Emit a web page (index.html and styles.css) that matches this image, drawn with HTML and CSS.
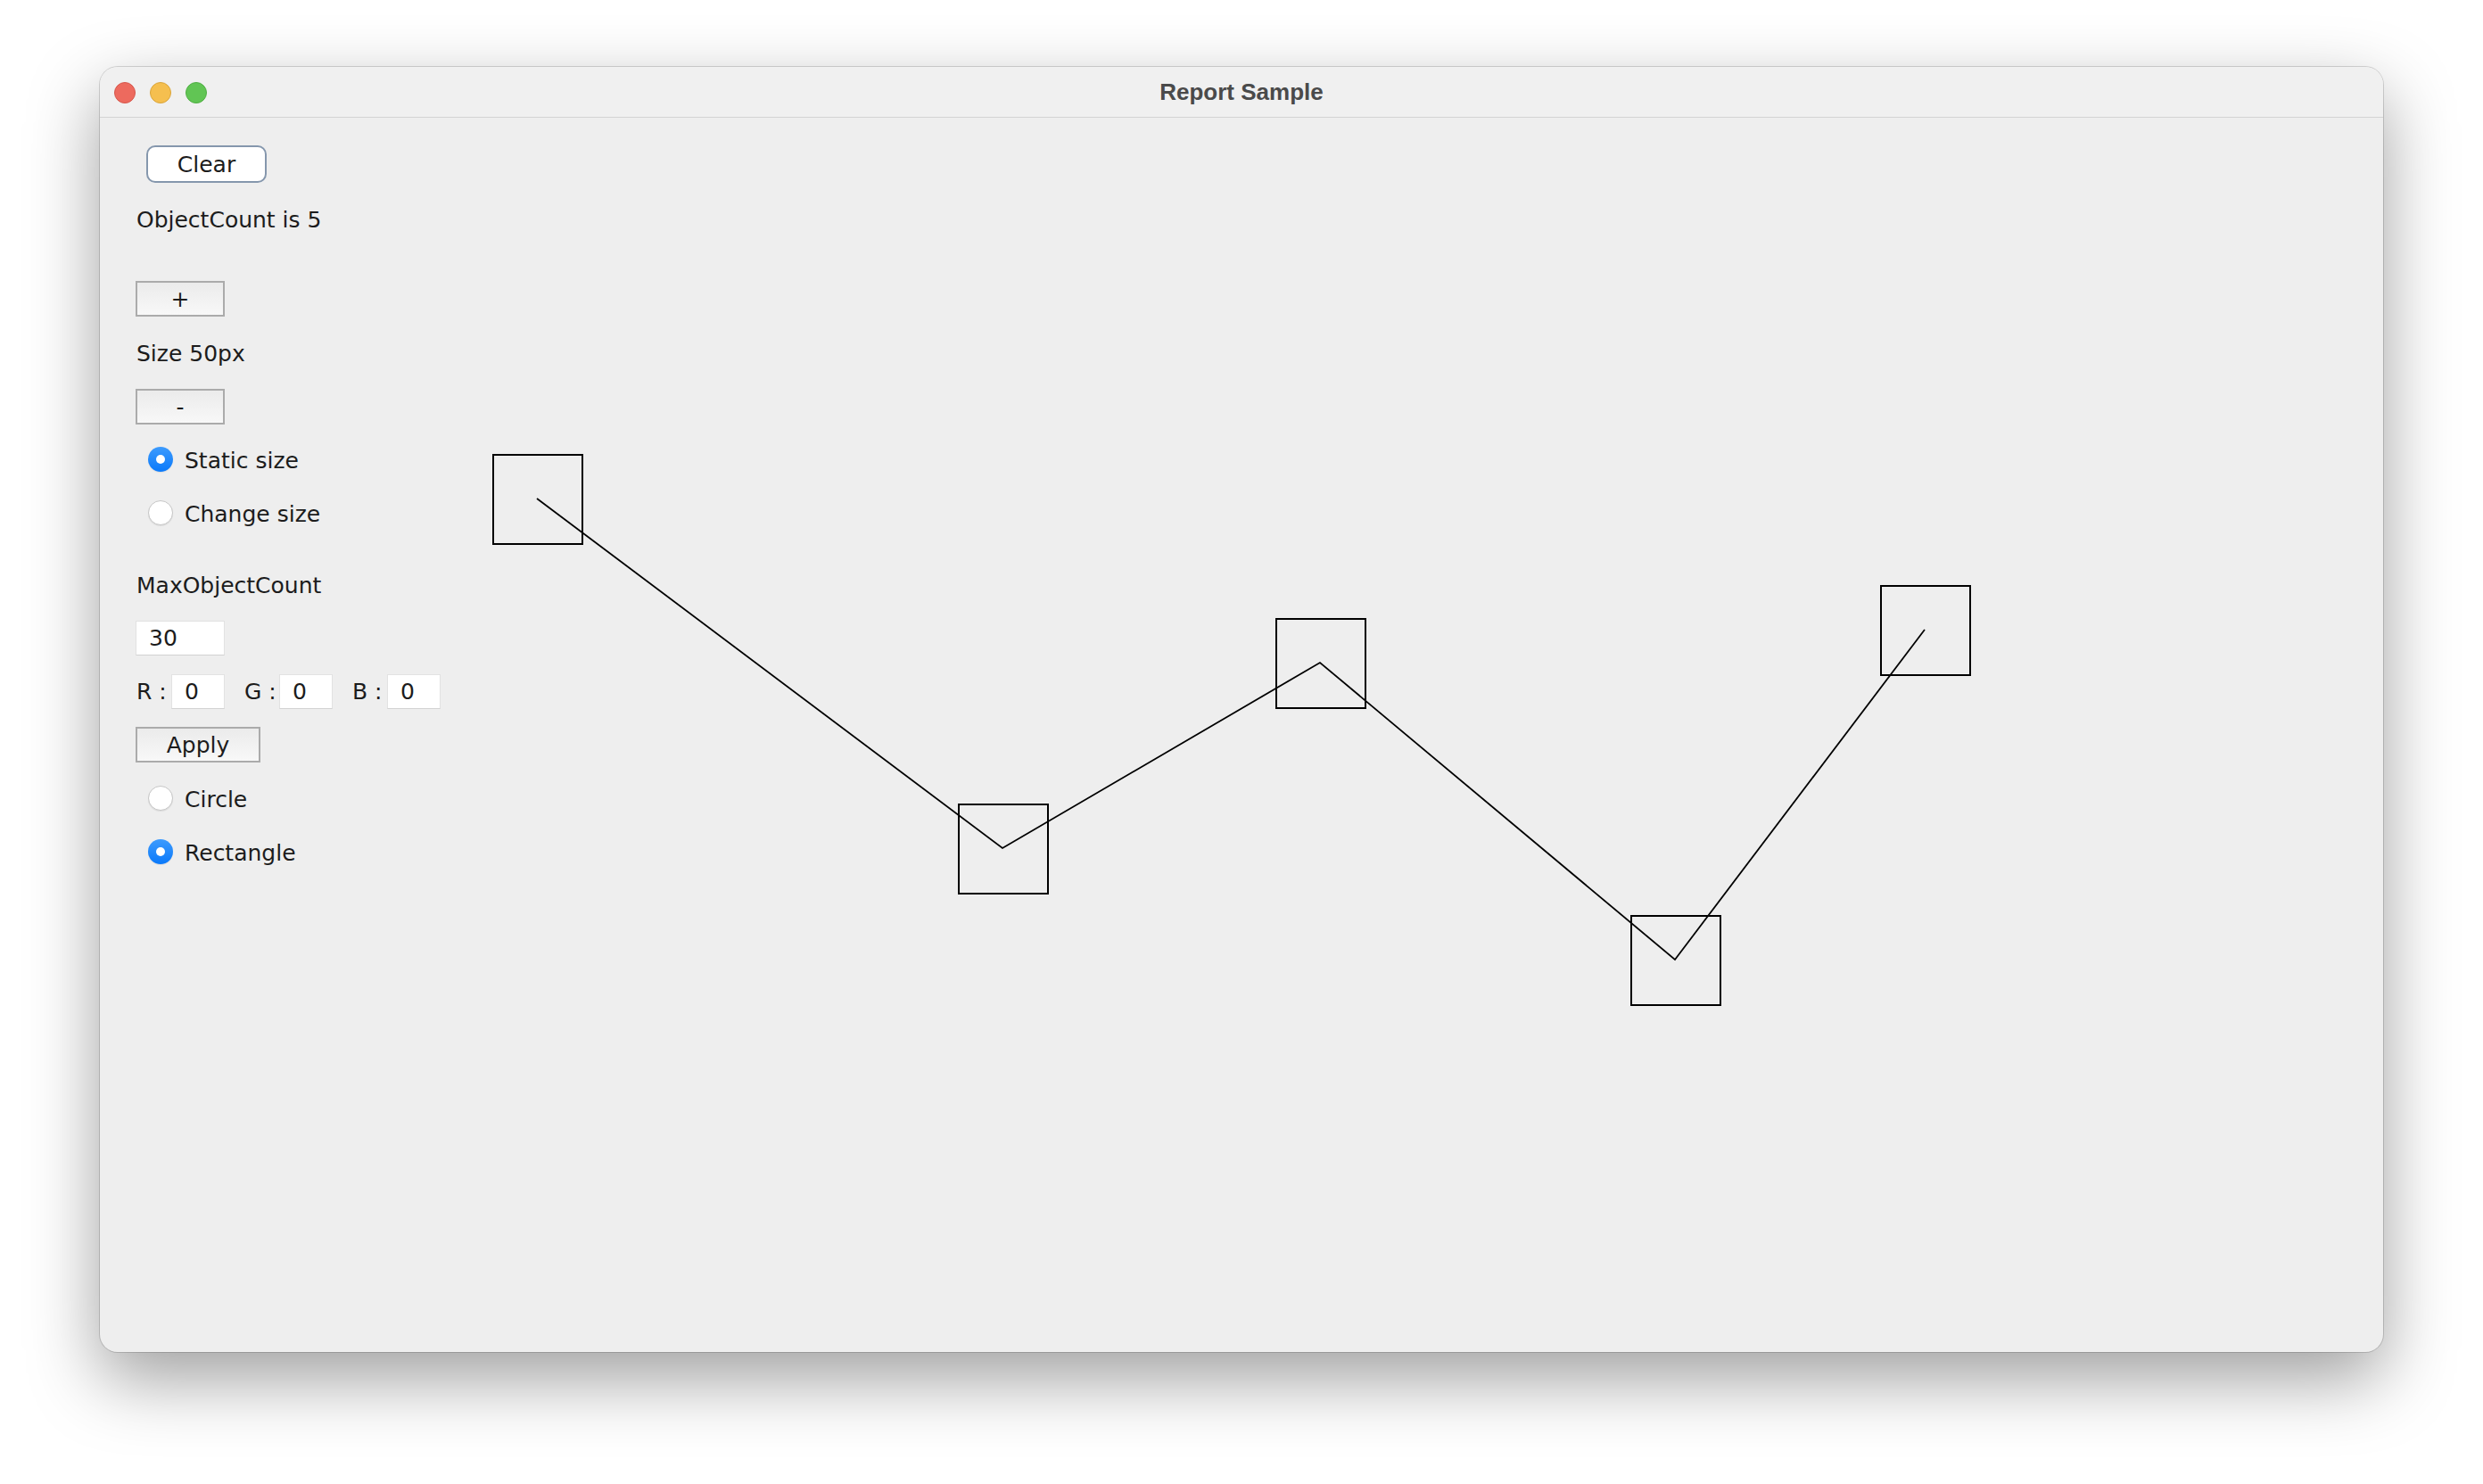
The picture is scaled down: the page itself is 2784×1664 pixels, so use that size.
FILE: index.html
```html
<!DOCTYPE html>
<html lang="en">
<head>
    <meta charset="UTF-8">
    <title>Report Sample</title>
    <link rel="stylesheet" href="styles.css">
</head>
<body>

    <div class="window">
        <div class="titlebar">
            <div class="lights">
                <span class="light red"></span>
                <span class="light yellow"></span>
                <span class="light green"></span>
            </div>
            <div class="title">Report Sample</div>
        </div>

        <div class="content">
            <svg class="canvas" width="2560" height="1383" viewBox="0 0 2560 1383">
                <g class="shapes">
                    <rect x="441" y="378" width="100" height="100"></rect>
                    <rect x="963" y="770" width="100" height="100"></rect>
                    <rect x="1319" y="562" width="100" height="100"></rect>
                    <rect x="1717" y="895" width="100" height="100"></rect>
                    <rect x="1997" y="525" width="100" height="100"></rect>
                </g>
                <polyline class="path" points="490,427 1012,819 1368,611 1766,944 2046,574"></polyline>
            </svg>

            <div class="panel">
                <button class="btn-default">Clear</button>
                <div class="label gap-a">ObjectCount is 5</div>
                <button class="btn btn-plus">+</button>
                <div class="label gap-a">Size 50px</div>
                <button class="btn btn-minus">-</button>

                <div class="radio gap-b"><span class="dot on"></span>Static size</div>
                <div class="radio gap-c"><span class="dot"></span>Change size</div>

                <div class="label gap-d">MaxObjectCount</div>
                <div class="field field-wide gap-b">30</div>

                <div class="rgb">
                    <div class="rgb-item"><span class="rgb-label">R :</span><div class="field">0</div></div>
                    <div class="rgb-item"><span class="rgb-label">G :</span><div class="field">0</div></div>
                    <div class="rgb-item"><span class="rgb-label">B :</span><div class="field">0</div></div>
                </div>

                <button class="btn btn-apply">Apply</button>

                <div class="radio gap-c"><span class="dot"></span>Circle</div>
                <div class="radio gap-c"><span class="dot on"></span>Rectangle</div>
            </div>
        </div>
    </div>

</body>
</html>
```

FILE: styles.css
```css
body {
    margin: 0;
    padding: 75px 0 0 112px;
    min-height: 1664px;
    box-sizing: border-box;
    background-color: #ffffff;
    font-family: 'DejaVu Sans', 'Noto Sans', sans-serif;
    font-size: 25px;
    color: #1c1c1c;
}

.window {
    width: 2560px;
    height: 1441px;
    border-radius: 20px;
    overflow: hidden;
    background-color: #eeeeee;
    box-shadow: 0 0 0 1px rgba(0, 0, 0, 0.15), 0 30px 80px rgba(0, 0, 0, 0.38);
    display: flex;
    flex-direction: column;
}

.titlebar {
    height: 56px;
    flex: none;
    background-color: #f0f0f0;
    border-bottom: 1px solid #d3d3d3;
    position: relative;
    display: flex;
    align-items: center;
    justify-content: center;
}

.lights {
    position: absolute;
    left: 16px;
    top: 17px;
    display: flex;
    gap: 16px;
}

.light {
    width: 22px;
    height: 22px;
    border-radius: 50%;
    border: 1px solid transparent;
}

.red {
    background-color: #ed6a5e;
    border-color: #d5574c;
}

.yellow {
    background-color: #f5bf4f;
    border-color: #d9a43a;
}

.green {
    background-color: #61c554;
    border-color: #4fae43;
}

.title {
    font-family: 'Liberation Sans', Arial, sans-serif;
    font-weight: bold;
    font-size: 26px;
    color: #4a4a4a;
}

.content {
    flex: 1;
    position: relative;
}

.canvas {
    position: absolute;
    left: 0;
    top: 0;
}

.shapes rect {
    fill: none;
    stroke: #000000;
    stroke-width: 2;
    shape-rendering: crispEdges;
}

.path {
    fill: none;
    stroke: #000000;
    stroke-width: 1.8;
}

.panel {
    position: relative;
    padding: 31px 0 0 40px;
    display: flex;
    flex-direction: column;
    align-items: flex-start;
}

.label {
    height: 40px;
    line-height: 40px;
    padding-left: 1px;
}

.gap-a {
    margin-top: 22px;
}

.gap-b {
    margin-top: 19px;
}

.gap-c {
    margin-top: 20px;
}

.gap-d {
    margin-top: 42px;
}

button {
    font-family: 'DejaVu Sans', 'Noto Sans', sans-serif;
    font-size: 25px;
    color: #1c1c1c;
    padding: 0;
    cursor: pointer;
}

.btn-default {
    margin-left: 12px;
    width: 135px;
    height: 42px;
    background-color: #ffffff;
    border: 2px solid #8597ad;
    border-radius: 10px;
}

.btn {
    width: 100px;
    height: 40px;
    background: linear-gradient(#ebebeb, #f8f8f8);
    border: 2px solid #ababab;
    border-radius: 0;
}

.btn-plus {
    margin-top: 48px;
}

.btn-minus {
    margin-top: 19px;
}

.btn-apply {
    width: 140px;
    margin-top: 20px;
}

.radio {
    height: 40px;
    display: flex;
    align-items: center;
    gap: 13px;
    padding-left: 14px;
    padding-top: 2px;
    box-sizing: border-box;
}

.dot {
    width: 28px;
    height: 28px;
    box-sizing: border-box;
    border-radius: 50%;
    background-color: #ffffff;
    border: 1px solid #c6c6c6;
    box-shadow: 0 1px 1px rgba(0, 0, 0, 0.08);
    margin-top: -2px;
    display: flex;
    align-items: center;
    justify-content: center;
}

.dot.on {
    border: none;
    background: linear-gradient(#3d9bfd, #0a79fa);
}

.dot.on::after {
    content: '';
    width: 10px;
    height: 10px;
    border-radius: 50%;
    background-color: #ffffff;
}

.field {
    width: 60px;
    height: 39px;
    box-sizing: border-box;
    background-color: #ffffff;
    border: 1px solid #e2e2e2;
    border-bottom-color: #d2d2d2;
    line-height: 37px;
    padding-left: 14px;
}

.field-wide {
    width: 100px;
}

.rgb {
    margin-top: 21px;
    display: flex;
    gap: 21px;
}

.rgb-item {
    display: flex;
    align-items: center;
}

.rgb-label {
    width: 40px;
    padding-left: 1px;
    box-sizing: border-box;
}
```
